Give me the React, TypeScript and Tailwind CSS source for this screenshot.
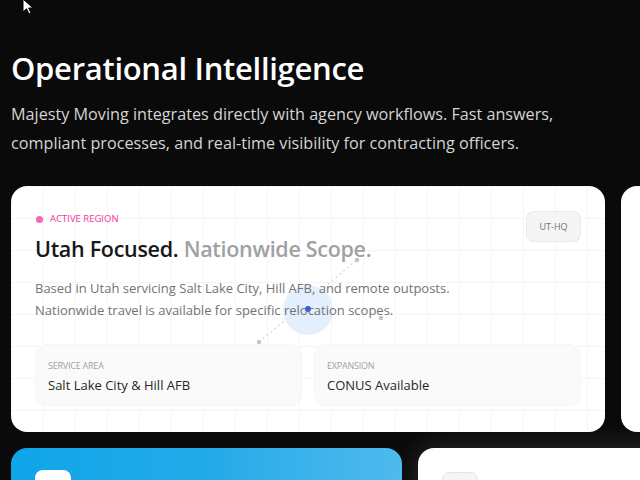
import React from "react";

const FONT = { fontFamily: '"Open Sans", "Noto Sans", sans-serif' };

function StatBox({ label, value }: { label: string; value: string }) {
  return (
    <div className="flex h-[62px] flex-col justify-center rounded-xl border border-neutral-100 bg-neutral-50/90 px-3 pt-[2px]">
      <div className="text-[9px] uppercase leading-3 tracking-tight text-neutral-400">{label}</div>
      <div className="mt-[5px] text-[13px] leading-4 text-neutral-800">{value}</div>
    </div>
  );
}

function RegionCard() {
  return (
    <div className="relative h-[246px] w-[594px] shrink-0 overflow-hidden rounded-2xl bg-white bg-[linear-gradient(to_right,#f5f5f5_1px,transparent_1px),linear-gradient(to_bottom,#f5f5f5_1px,transparent_1px)] bg-[size:32px_32px] bg-[position:0px_0px] px-6 pt-[26px]">
      {/* map marker overlay */}
      <svg className="pointer-events-none absolute left-0 top-0" width="594" height="246" viewBox="0 0 594 246">
        <line x1="248" y1="156" x2="346" y2="74" stroke="#cbd5e1" strokeWidth="1.2" strokeDasharray="2 3" />
        <circle cx="297" cy="124" r="25" fill="#dbeafe" fillOpacity="0.75" />
        <circle cx="297" cy="123" r="3" fill="#2563eb" />
        <circle cx="248" cy="156" r="2.2" fill="#c4c4c4" />
        <circle cx="346" cy="74" r="2.2" fill="#c4c4c4" />
        <circle cx="370" cy="132" r="2.2" fill="#c4c4c4" />
      </svg>

      <div className="absolute right-6 top-[25px] flex h-[31px] w-[55px] items-center justify-center rounded-lg border border-neutral-200/70 bg-neutral-100 text-[9px] text-neutral-500">
        UT-HQ
      </div>

      <div className="relative">
        <div className="flex items-center gap-[7px] pl-[1px]">
          <span className="h-[7px] w-[7px] rounded-full bg-pink-400" />
          <span className="text-[9.5px] uppercase text-pink-500">Active Region</span>
        </div>
        <h2 className="mt-[9px] text-[21.5px] font-semibold leading-7 tracking-[-0.3px] text-neutral-900">
          Utah Focused. <span className="text-neutral-400">Nationwide Scope.</span>
        </h2>
        <p className="mt-[14px] text-[13px] leading-[22px] text-neutral-500">
          Based in Utah servicing Salt Lake City, Hill AFB, and remote outposts.
          <br />
          Nationwide travel is available for specific relocation scopes.
        </p>
        <div className="mt-[23px] grid grid-cols-2 gap-3">
          <StatBox label="Service Area" value="Salt Lake City & Hill AFB" />
          <StatBox label="Expansion" value="CONUS Available" />
        </div>
      </div>
    </div>
  );
}

export default function App() {
  return (
    <div className="relative h-[480px] w-[640px] overflow-hidden bg-[#0b0a0a]" style={FONT}>
      <svg className="absolute left-[22px] top-[-2px]" width="14" height="18" viewBox="0 0 14 18">
        <path d="M1 1 L1 14 L4.5 10.8 L7 16 L9 15 L6.6 10 L11 10 Z" fill="#fff" stroke="#000" strokeWidth="1" />
      </svg>

      <div className="px-[11px] pt-[48px]">
        <h1 className="text-[31px] font-semibold leading-10 tracking-[-0.3px] text-white">Operational Intelligence</h1>
        <p className="mt-[12px] text-[16.2px] leading-[29px] text-neutral-300">
          Majesty Moving integrates directly with agency workflows. Fast answers,
          <br />
          compliant processes, and real-time visibility for contracting officers.
        </p>

        <div className="mt-[28px] flex gap-4">
          <RegionCard />
          <div className="h-[246px] w-[300px] shrink-0 rounded-2xl bg-white" />
        </div>

        <div className="mt-4 flex gap-4">
          <div className="h-[120px] w-[391px] shrink-0 rounded-2xl bg-gradient-to-r from-[#0ea5e9] via-[#22aae8] to-[#4dbaed] px-6 pt-[22px]">
            <div className="h-9 w-9 rounded-lg bg-white" />
          </div>
          <div className="h-[120px] w-[300px] shrink-0 rounded-2xl bg-white px-6 pt-[24px] shadow-[0_0_30px_rgba(255,255,255,0.15)]">
            <div className="h-9 w-9 rounded-lg border border-neutral-200 bg-neutral-100" />
          </div>
        </div>
      </div>
    </div>
  );
}
